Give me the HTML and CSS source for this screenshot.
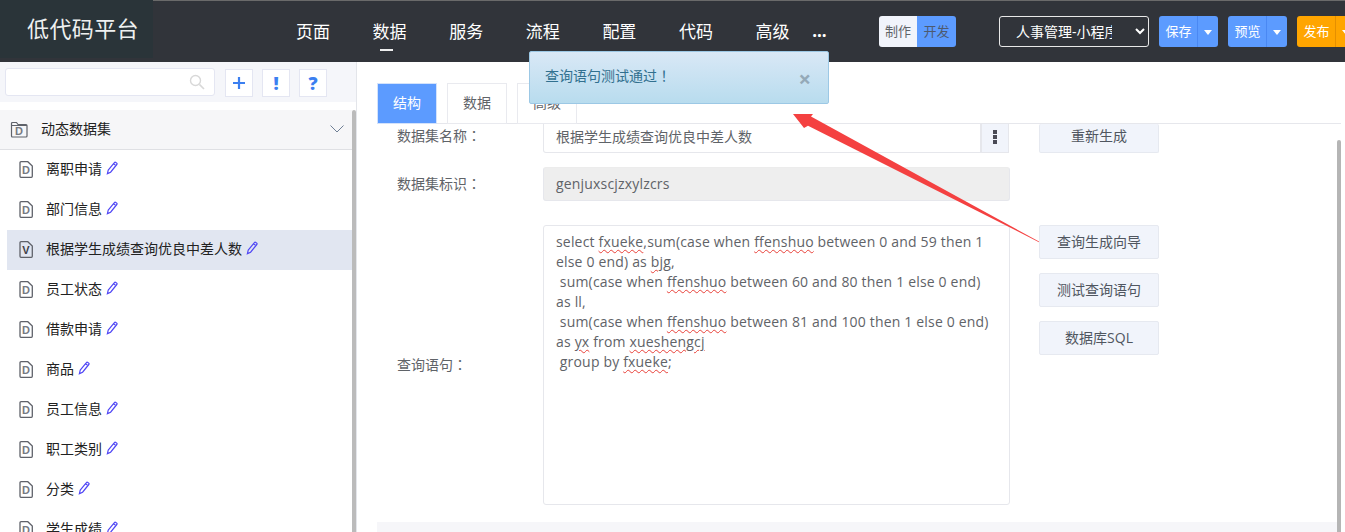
FILE: index.html
```html
<!DOCTYPE html>
<html lang="zh-CN">
<head>
<meta charset="utf-8">
<title>低代码平台</title>
<link rel="stylesheet" href="styles.css">
</head>
<body>
<svg width="0" height="0" class="defs">
  <symbol id="file" viewBox="0 0 14 17"><path d="M2 .7h6.800l4.500 4.300v10.300a1 1 0 0 1-1 1H2a1 1 0 0 1-1-1V1.700a1 1 0 0 1 1-1z" fill="none" stroke="#5f626a" stroke-width="1.300"/></symbol>
  <symbol id="pen" viewBox="0 0 12 14"><path d="M2.200 9.200 8.400 1.600a1 1 0 0 1 1.400-.2l.9.7a1 1 0 0 1 .1 1.400L4.600 11.200 1.400 12.600z M7.600 2.700l2.400 1.900" fill="none" stroke="#4f46f5" stroke-width="1.200"/></symbol>
</svg>
<header class="topbar">
  <div class="logo">低代码平台</div>
  <nav class="nav">
    <a class="nav-item">页面</a>
    <a class="nav-item active">数据</a>
    <a class="nav-item">服务</a>
    <a class="nav-item">流程</a>
    <a class="nav-item">配置</a>
    <a class="nav-item">代码</a>
    <a class="nav-item">高级</a>
    <span class="nav-more">...</span>
  </nav>
  <div class="mode">
    <span class="mode-a">制作</span><span class="mode-b">开发</span>
  </div>
  <select class="app-select"><option>人事管理-小程序</option></select>
  <div class="split blue"><span class="split-main">保存</span><span class="split-caret"></span></div>
  <div class="split blue"><span class="split-main">预览</span><span class="split-caret"></span></div>
  <div class="split orange"><span class="split-main">发布</span><span class="split-caret"></span></div>
</header>
<div class="layout">
  <aside class="sidebar">
    <div class="toolbar">
      <div class="search">
        <svg class="search-icon" viewBox="0 0 16 16" width="16" height="16"><circle cx="6.500" cy="6.500" r="5" fill="none" stroke="#d8d8d8" stroke-width="1.400"/><path d="M10.400 10.400 15 15" stroke="#d8d8d8" stroke-width="1.600"/></svg>
      </div>
      <span class="tool"><svg viewBox="0 0 14 14" width="14" height="14"><path d="M7 1v12M1 7h12" stroke="#3b7ff0" stroke-width="2.200"/></svg></span>
      <span class="tool">!</span>
      <span class="tool">?</span>
    </div>
    <div class="tree">
      <div class="tree-list">
        <div class="group">
          <span class="file-icon folder"><svg viewBox="0 0 18 17" width="18" height="17"><path d="M1.500 4V2.500a1 1 0 0 1 1-1h4l1.500 2h8a1 1 0 0 1 1 1V15a1 1 0 0 1-1 1h-13.500a1 1 0 0 1-1-1z M1.500 4.500h15" fill="none" stroke="#5f626a" stroke-width="1.200"/></svg><b>D</b></span>
          <span class="group-name">动态数据集</span>
          <svg class="chev" viewBox="0 0 14 8" width="14" height="8"><path d="M.5.5 7 7l6.500-6.500" fill="none" stroke="#6f7f95" stroke-width="1"/></svg>
        </div>
        <div class="item"><span class="file-icon"><svg width="14" height="17"><use href="#file"/></svg><b>D</b></span><span>离职申请</span><svg class="pen" width="12" height="14"><use href="#pen"/></svg></div>
        <div class="item"><span class="file-icon"><svg width="14" height="17"><use href="#file"/></svg><b>D</b></span><span>部门信息</span><svg class="pen" width="12" height="14"><use href="#pen"/></svg></div>
        <div class="item selected"><span class="file-icon"><svg width="14" height="17"><use href="#file"/></svg><b class="dark">V</b></span><span>根据学生成绩查询优良中差人数</span><svg class="pen" width="12" height="14"><use href="#pen"/></svg></div>
        <div class="item"><span class="file-icon"><svg width="14" height="17"><use href="#file"/></svg><b>D</b></span><span>员工状态</span><svg class="pen" width="12" height="14"><use href="#pen"/></svg></div>
        <div class="item"><span class="file-icon"><svg width="14" height="17"><use href="#file"/></svg><b>D</b></span><span>借款申请</span><svg class="pen" width="12" height="14"><use href="#pen"/></svg></div>
        <div class="item"><span class="file-icon"><svg width="14" height="17"><use href="#file"/></svg><b>D</b></span><span>商品</span><svg class="pen" width="12" height="14"><use href="#pen"/></svg></div>
        <div class="item"><span class="file-icon"><svg width="14" height="17"><use href="#file"/></svg><b>D</b></span><span>员工信息</span><svg class="pen" width="12" height="14"><use href="#pen"/></svg></div>
        <div class="item"><span class="file-icon"><svg width="14" height="17"><use href="#file"/></svg><b>D</b></span><span>职工类别</span><svg class="pen" width="12" height="14"><use href="#pen"/></svg></div>
        <div class="item"><span class="file-icon"><svg width="14" height="17"><use href="#file"/></svg><b>D</b></span><span>分类</span><svg class="pen" width="12" height="14"><use href="#pen"/></svg></div>
        <div class="item"><span class="file-icon"><svg width="14" height="17"><use href="#file"/></svg><b>D</b></span><span>学生成绩</span><svg class="pen" width="12" height="14"><use href="#pen"/></svg></div>
      </div>
      <div class="scrollbar"></div>
    </div>
  </aside>
  <main class="main">
    <div class="tabs">
      <span class="tab on">结构</span>
      <span class="tab">数据</span>
      <span class="tab">高级</span>
    </div>
    <div class="body">
      <div class="form-col">
        <div class="form">
          <div class="row row-name">
            <label class="label first">数据集名称<span class="punct" lang="zh-TW">：</span></label>
            <div class="field-group">
              <div class="field">根据学生成绩查询优良中差人数</div>
              <span class="field-more"><i></i><i></i><i></i></span>
            </div>
            <div class="actions"><span class="btn short">重新生成</span></div>
          </div>
          <div class="row row-id">
            <label class="label">数据集标识<span class="punct" lang="zh-TW">：</span></label>
            <div class="field readonly">genjuxscjzxylzcrs</div>
          </div>
          <div class="row row-sql">
            <label class="label">查询语句<span class="punct" lang="zh-TW">：</span></label>
            <div class="sql">select <u>fxueke</u>,sum(case when <u>ffenshuo</u> between 0 and 59 then 1 else 0 end) as <u>bjg</u>,
 sum(case when <u>ffenshuo</u> between 60 and 80 then 1 else 0 end) as ll,
 sum(case when <u>ffenshuo</u> between 81 and 100 then 1 else 0 end) as <u>yx</u> from <u>xueshengcj</u>
 group by <u>fxueke</u>;</div>
            <div class="actions">
              <span class="btn">查询生成向导</span>
              <span class="btn">测试查询语句</span>
              <span class="btn">数据库SQL</span>
            </div>
          </div>
        </div>
        <div class="strip"></div>
      </div>
      <div class="main-scroll"></div>
    </div>
  </main>
</div>
<div class="toast">
  <span>查询语句测试通过<span class="punct" lang="zh-TW">！</span></span>
  <span class="toast-close">×</span>
</div>
<svg class="arrow" viewBox="0 0 1345 532" width="1345" height="532"><path d="M793 114H813L811 116.500 1039 241.600V242.200L808 125.700 804 128Z" fill="#f44141"/></svg>
</body>
</html>
```
FILE: styles.css
```css
* { box-sizing: border-box; }
html, body { height: 100%; }
body {
  margin: 0;
  width: 1345px;
  height: 532px;
  overflow: hidden;
  background: #fff;
  display: flex;
  flex-direction: column;
  font: 14px/20px "Open Sans", "Noto Sans CJK SC", sans-serif;
  color: #5f6368;
}
.defs { position: absolute; }
.punct { font-family: "Noto Sans CJK TC", sans-serif; }

.topbar {
  height: 62px;
  flex: none;
  display: flex;
  align-items: flex-start;
  background: linear-gradient(#6a6a6a 1px, #31343a 1px);
  overflow: hidden;
}
.logo {
  width: 153px;
  height: 58px;
  flex: none;
  background: #2a3439;
  color: #eef0f0;
  font-size: 22px;
  letter-spacing: .4px;
  line-height: 57px;
  padding-left: 27px;
  white-space: nowrap;
}
.nav {
  display: flex;
  align-items: flex-start;
  margin: 1px 0 0 122px;
  width: 604px;
  flex: none;
  color: #fff;
  font-size: 17px;
}
.nav-item {
  width: 76.600px;
  flex: none;
  height: 50px;
  line-height: 24px;
  padding: 19px 21px 0;
  white-space: nowrap;
  position: relative;
}
.nav-item.active::after {
  content: "";
  position: absolute;
  left: 28px;
  top: 48px;
  width: 13px;
  height: 2px;
  background: #eee;
}
.nav-more { font-weight: 700; font-size: 17px; line-height: 24px; padding-top: 18px; margin-left: 1px; }
.mode {
  display: flex;
  flex: none;
  height: 31px;
  margin-top: 16px;
  border-radius: 3px;
  overflow: hidden;
  font-size: 13px;
  line-height: 31px;
}
.mode-a { width: 38px; background: #f1f4fb; text-align: center; color: #5f6368; }
.mode-b { width: 39px; background: #5c9bff; text-align: center; color: #4d5a70; }
.app-select {
  width: 150px;
  height: 31px;
  flex: none;
  margin: 16px 0 0 43px;
  background: #31343a;
  color: #fff;
  border: 1px solid #e8e8e8;
  border-radius: 3px;
  padding: 0 20px 0 12px;
  font: 14px "Open Sans", "Noto Sans CJK SC", sans-serif;
}
.split {
  display: flex;
  flex: none;
  width: 59px;
  height: 31px;
  margin: 16px 0 0 10px;
  color: #fff;
  border-radius: 3px;
  font-size: 13px;
  line-height: 31px;
  overflow: hidden;
}
.split.blue { background: #5c9bff; }
.split.orange { background: #ffa500; }
.split-main { width: 39px; flex: none; text-align: center; padding-left: 1px; border-right: 1px solid rgba(40,100,220,.35); }
.orange .split-main { border-right-color: rgba(190,110,0,.4); }
.split-caret { flex: 1; display: flex; align-items: center; justify-content: center; padding-top: 2px; }
.split-caret::after {
  content: "";
  border-left: 4.500px solid transparent;
  border-right: 4.500px solid transparent;
  border-top: 5px solid #fff;
}

.layout { flex: 1; display: flex; min-height: 0; }
.sidebar {
  width: 357px;
  flex: none;
  display: flex;
  flex-direction: column;
  border-right: 1px solid #e3e5ea;
}
.toolbar {
  height: 40px;
  flex: none;
  background: #f5f6fa;
  display: flex;
  align-items: flex-start;
  gap: 9px;
  padding: 6px 0 0 5px;
}
.search {
  width: 210px;
  height: 28px;
  margin-right: 1px;
  background: #fff;
  border: 1px solid #e4e6f2;
  border-radius: 3px;
  display: flex;
  align-items: center;
  justify-content: flex-end;
  padding-right: 9px;
}
.tool {
  width: 28px;
  height: 28px;
  margin-top: 1px;
  background: #fff;
  border: 1px solid #e4e6f2;
  display: flex;
  align-items: center;
  justify-content: center;
  color: #3b7ff0;
  font-size: 18px;
  font-weight: 800;
}
.tree { flex: 1; display: flex; min-height: 0; padding-top: 8px; }
.tree-list { flex: 1; overflow: hidden; color: #222; }
.scrollbar { width: 4px; background: #bbb; flex: none; border-radius: 2px 2px 0 0; }
.group {
  height: 40px;
  background: #f6f6f8;
  border-bottom: 1px solid #dfe0e4;
  display: flex;
  align-items: center;
  padding: 0 8px 1px 10px;
}
.group-name { margin-left: 13px; flex: 1; }
.file-icon { position: relative; display: flex; flex: none; }
.file-icon b {
  position: absolute;
  inset: 0;
  text-align: center;
  font: 700 11px/18px "Liberation Sans", sans-serif;
  color: #777a82;
}
.file-icon b.dark { color: #3f4148; }
.file-icon.folder b { line-height: 20px; }
.item {
  height: 40px;
  display: flex;
  align-items: center;
  padding: 0 0 2px 19px;
  color: #222;
  white-space: nowrap;
}
.item .file-icon { margin-right: 13px; }
.item.selected { margin-left: 7px; padding-left: 12px; background: #e1e6f1; }
.pen { margin: -3px 0 0 4px; flex: none; }

.main { flex: 1; min-width: 0; display: flex; flex-direction: column; padding: 21px 4px 0 20px; }
.tabs {
  height: 41px;
  flex: none;
  display: flex;
  gap: 10px;
  border-bottom: 1px solid #e6e7ec;
}
.tab {
  width: 60px;
  height: 41px;
  border: 1px solid #e9eaef;
  background: #fff;
  text-align: center;
  line-height: 38px;
  color: #5f6368;
}
.tab.on { background: #5c9bff; border-color: #d3e2fb; color: #fff; }
.body { flex: 1; display: flex; min-height: 0; }
.form-col { flex: 1; display: flex; flex-direction: column; justify-content: space-between; }
.row {
  display: grid;
  grid-template-columns: 166px 467px 149px;
}
.row-name { height: 29px; margin-bottom: 14px; }
.row-id { height: 34px; margin-bottom: 24px; }
.row-sql { height: 280px; }
.label { padding: 0 0 2px 20px; align-self: center; color: #5f6368; white-space: nowrap; }
.label.first { align-self: start; padding: 1px 0 0 20px; }
.field-group { display: flex; width: 466px; }
.field {
  flex: 1;
  background: #fff;
  border: 1px solid #e6e7ec;
  border-top: 0;
  padding: 2px 12px 0;
  line-height: 22px;
  border-radius: 0 0 0 3px;
  color: #5f6368;
}
.field.readonly {
  background: #eee;
  border-top: 1px solid #ececec;
  border-radius: 3px;
  line-height: 32px;
  padding-top: 0;
  letter-spacing: .18px;
}
.field-more {
  width: 28px;
  background: #f1f4fb;
  border: 1px solid #e6e7ec;
  border-width: 0 1px 1px 0;
  border-left: 1px solid #e6e7ec;
  display: flex;
  flex-direction: column;
  align-items: center;
  padding-top: 6px;
  gap: 1px;
}
.field-more i { width: 4px; height: 4px; background: #4a4a55; }
.sql {
  border: 1px solid #e6e7ec;
  border-radius: 3px;
  padding: 6px 12px;
  white-space: pre-wrap;
  letter-spacing: .18px;
  color: #5f6368;
}
.sql u { text-decoration: underline wavy #e8413a 1px; text-underline-offset: 2px; }
.actions { display: flex; flex-direction: column; gap: 14px; padding-left: 29px; }
.btn {
  height: 34px;
  flex: none;
  background: #f1f4fb;
  border: 1px solid #e6e9f0;
  border-radius: 2px;
  text-align: center;
  line-height: 32px;
  color: #505660;
}
.btn.short { height: 29px; line-height: 24px; border-top: 0; }
.strip { height: 10px; background: #f6f6f9; }
.main-scroll { width: 4px; flex: none; background: #b5b5b5; margin-top: 16px; border-radius: 2px 2px 0 0; }

.toast {
  position: absolute;
  left: 529px;
  top: 51px;
  width: 300px;
  height: 53px;
  display: flex;
  align-items: center;
  justify-content: space-between;
  padding: 0 17px 4px 15px;
  background: linear-gradient(#d9e8f6, #b8dcee);
  border: 1px solid #9cc8e5;
  border-radius: 2px;
  color: #31708f;
}
.toast-close { font-size: 22px; font-weight: 700; color: #94a9b8; line-height: 20px; margin-top: 4px; }
.arrow { position: absolute; left: 0; top: 0; pointer-events: none; }
```
